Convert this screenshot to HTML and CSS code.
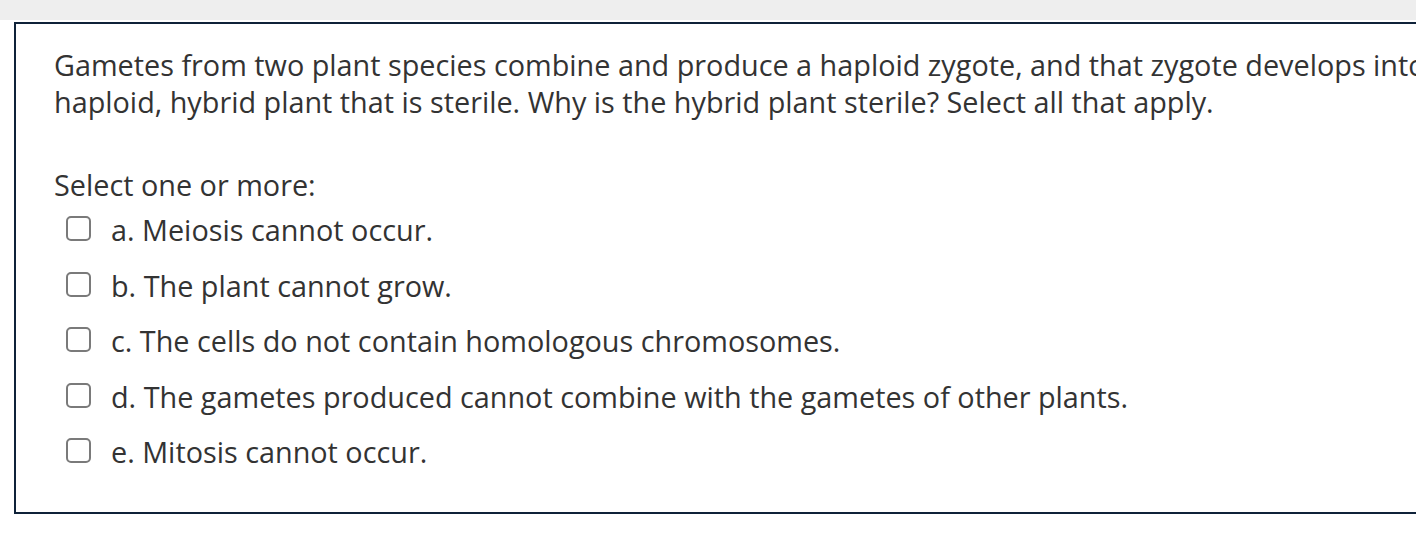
FILE: index.html
```html
<!DOCTYPE html>
<html>
<head>
<meta charset="utf-8">
<link rel="stylesheet" href="styles.css">
</head>
<body>
<div class="topband"></div>
<div class="question">
  <div class="qtext">Gametes from two plant species combine and produce a haploid zygote, and that zygote develops into a haploid, hybrid plant that is sterile. Why is the hybrid plant sterile? Select all that apply.</div>
  <div class="prompt">Select one or more:</div>
  <div class="answers">
    <label class="opt"><span class="box"></span><span class="lbl">a. Meiosis cannot occur.</span></label>
    <label class="opt"><span class="box"></span><span class="lbl">b. The plant cannot grow.</span></label>
    <label class="opt"><span class="box"></span><span class="lbl">c. The cells do not contain homologous chromosomes.</span></label>
    <label class="opt"><span class="box"></span><span class="lbl">d. The gametes produced cannot combine with the gametes of other plants.</span></label>
    <label class="opt"><span class="box"></span><span class="lbl">e. Mitosis cannot occur.</span></label>
  </div>
</div>
</body>
</html>
```

FILE: styles.css
```css
html, body {
  margin: 0;
  padding: 0;
  background: #fff;
  overflow: hidden;
}
body {
  width: 1416px;
  height: 548px;
  font-family: "Open Sans", "Liberation Sans", sans-serif;
  color: #333;
  font-size: 28.8px;
}
.topband {
  height: 20px;
  background: #eeeeee;
}
.question {
  margin-top: 2px;
  margin-left: 14px;
  width: 1402px;
  height: 492px;
  border: 2px solid #0f2239;
  border-right: none;
  box-sizing: border-box;
  padding: 23px 0 0 38px;
  overflow: hidden;
}
.qtext {
  line-height: 36.7px;
  width: 1500px;
}
.prompt {
  margin-top: 46.6px;
  line-height: 36.7px;
}
.answers {
  display: flex;
  flex-direction: column;
  gap: 18.8px;
  padding-left: 12px;
  margin-top: 8.5px;
}
.opt {
  display: flex;
  align-items: center;
  line-height: 36.7px;
}
.box {
  width: 21px;
  height: 21px;
  border: 2px solid #7a7a7a;
  border-radius: 5px;
  margin-right: 20px;
  margin-bottom: 4px;
  flex: none;
}
```
